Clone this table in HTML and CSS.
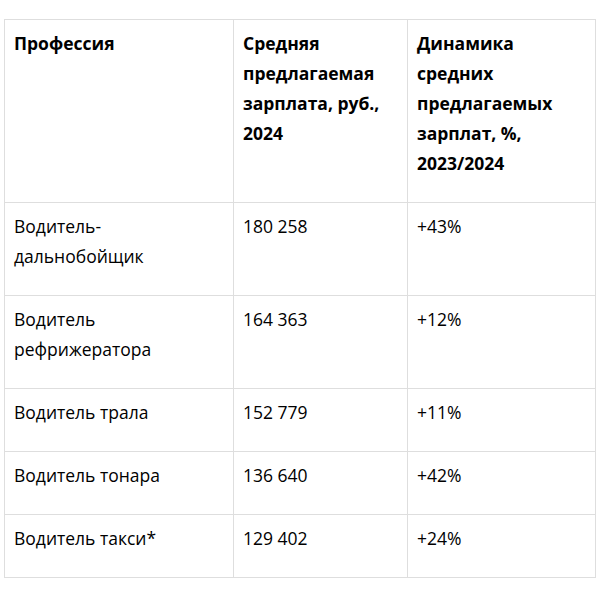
FILE: index.html
```html
<!DOCTYPE html>
<html lang="ru">
<head>
<meta charset="utf-8">
<link rel="stylesheet" href="styles.css">
</head>
<body>
<table class="salary">
<colgroup><col class="c1"><col class="c2"><col class="c3"></colgroup>
<thead>
<tr><th>Профессия</th><th>Средняя предлагаемая зарплата, руб., 2024</th><th>Динамика средних предлагаемых зарплат, %, 2023/2024</th></tr>
</thead>
<tbody>
<tr><td>Водитель-дальнобойщик</td><td>180 258</td><td>+43%</td></tr>
<tr><td>Водитель рефрижератора</td><td>164 363</td><td>+12%</td></tr>
<tr><td>Водитель трала</td><td>152 779</td><td>+11%</td></tr>
<tr><td>Водитель тонара</td><td>136 640</td><td>+42%</td></tr>
<tr><td>Водитель такси*</td><td>129 402</td><td>+24%</td></tr>
</tbody>
</table>
</body>
</html>
```
FILE: styles.css
```css
html, body { margin: 0; padding: 0; background: #fff; }
body { padding: 19px 0 0 4px; font-family: "Open Sans", "Liberation Sans", sans-serif; color: #000; }
.salary { border-collapse: collapse; width: 591px; table-layout: fixed; font-size: 17.5px; line-height: 30px; }
.c1 { width: 229px; }
.c2 { width: 174px; }
.c3 { width: 188px; }
.salary th, .salary td { border: 1px solid #dedede; padding: 8px 9px 24px 9px; text-align: left; vertical-align: top; }
.salary th { font-weight: 700; }
.salary td { font-weight: 400; }
```
